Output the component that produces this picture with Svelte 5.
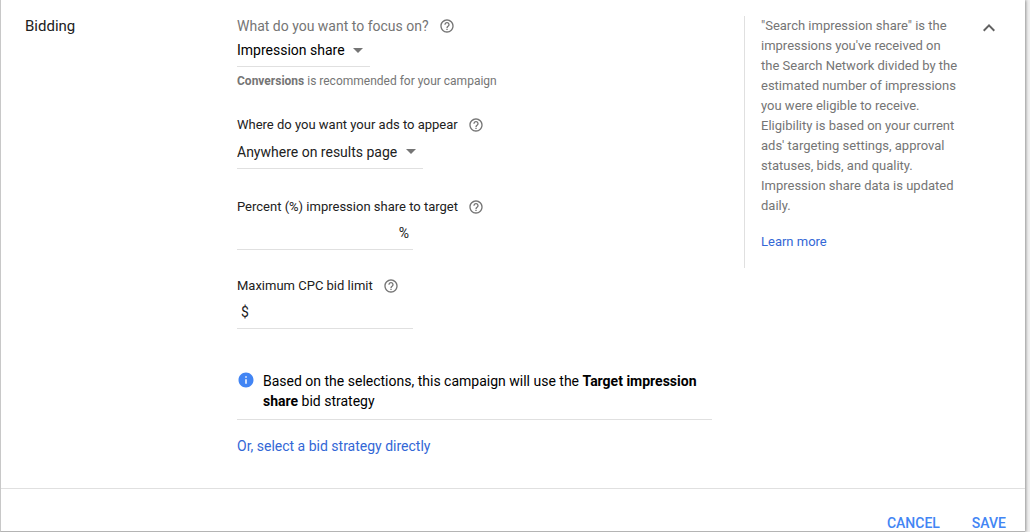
<script lang="ts">
  let focus = $state("Impression share");
  let placement = $state("Anywhere on results page");
  let percent = $state("");
  let bidLimit = $state("");
  let expanded = $state(true);

  const focusOptions = ["Conversions", "Clicks", "Impression share"];
  const placementOptions = [
    "Anywhere on results page",
    "Top of results page",
  ];
</script>

{#snippet help(topic: string)}
  <button type="button" class="help" aria-label={`Help: ${topic}`}>
    <svg viewBox="0 0 24 24" aria-hidden="true">
      <path
        d="M11 18h2v-2h-2v2zm1-16C6.48 2 2 6.48 2 12s4.48 10 10 10 10-4.48 10-10S17.52 2 12 2zm0 18c-4.41 0-8-3.59-8-8s3.59-8 8-8 8 3.59 8 8-3.59 8-8 8zm0-14c-2.21 0-4 1.79-4 4h2c0-1.1.9-2 2-2s2 .9 2 2c0 2-3 1.75-3 5h2c0-2.25 3-2.5 3-5 0-2.21-1.79-4-4-4z"
      />
    </svg>
  </button>
{/snippet}

{#snippet arrow()}
  <svg class="arrow" viewBox="0 0 10 5" aria-hidden="true">
    <path d="M0 0h10L5 5z" />
  </svg>
{/snippet}

<div class="panel">
  <section class="bidding">
    <h2>Bidding</h2>

    <div class="settings">
      <div class="field">
        <div class="question lead">
          <label for="focus">What do you want to focus on?</label>
          {@render help("focus")}
        </div>
        <div class="dropdown primary">
          <select id="focus" bind:value={focus}>
            {#each focusOptions as option}
              <option>{option}</option>
            {/each}
          </select>
          {@render arrow()}
        </div>
        <p class="hint"><b>Conversions</b> is recommended for your campaign</p>
      </div>

      <div class="field">
        <div class="question">
          <label for="placement">Where do you want your ads to appear</label>
          {@render help("ad placement")}
        </div>
        <div class="dropdown">
          <select id="placement" bind:value={placement}>
            {#each placementOptions as option}
              <option>{option}</option>
            {/each}
          </select>
          {@render arrow()}
        </div>
      </div>

      <div class="field">
        <div class="question">
          <label for="percent">Percent (%) impression share to target</label>
          {@render help("impression share target")}
        </div>
        <div class="amount">
          <input id="percent" type="text" inputmode="decimal" bind:value={percent} />
          <span>%</span>
        </div>
      </div>

      <div class="field">
        <div class="question">
          <label for="bid-limit">Maximum CPC bid limit</label>
          {@render help("bid limit")}
        </div>
        <div class="amount">
          <span>$</span>
          <input id="bid-limit" type="text" inputmode="decimal" bind:value={bidLimit} />
        </div>
      </div>

      <div class="summary">
        <svg viewBox="0 0 24 24" aria-hidden="true">
          <path
            d="M12 2C6.48 2 2 6.48 2 12s4.48 10 10 10 10-4.48 10-10S17.52 2 12 2zm1 15h-2v-6h2v6zm0-8h-2V7h2v2z"
          />
        </svg>
        <p>
          Based on the selections, this campaign will use the
          <b>Target impression share</b> bid strategy
        </p>
      </div>

      <a class="direct" href="#strategy">Or, select a bid strategy directly</a>
    </div>

    <aside>
      <p>
        "Search impression share" is the impressions you've received on the
        Search Network divided by the estimated number of impressions you were
        eligible to receive. Eligibility is based on your current ads' targeting
        settings, approval statuses, bids, and quality. Impression share data is
        updated daily.
      </p>
      <a href="#learn">Learn more</a>
    </aside>

    <button
      type="button"
      class="collapse"
      aria-label="Collapse bidding"
      aria-expanded={expanded}
      onclick={() => (expanded = !expanded)}
    >
      <svg viewBox="0 0 24 24" aria-hidden="true">
        <path d="M12 8l-6 6 1.41 1.41L12 10.83l4.59 4.58L18 14z" />
      </svg>
    </button>
  </section>

  <footer>
    <button type="button">CANCEL</button>
    <button type="button">SAVE</button>
  </footer>
</div>

<style>
  :global(body) {
    background: #f0f0f0;
    font-family: Roboto, "Liberation Sans", sans-serif;
    font-size: 14px;
    line-height: 20px;
    color: #212121;
  }

  .panel {
    margin-right: 5px;
    background: #fff;
    border-left: 1px solid #c8c8c8;
    border-bottom: 1px solid #b4b4b4;
    box-shadow: 1px 0 3px rgba(0, 0, 0, 0.4);
  }

  .bidding {
    display: grid;
    grid-template-columns: 212px minmax(0, 1fr) 233px 24px;
    align-items: start;
    padding: 16px 24px 32px;
    border-bottom: 1px solid #e0e0e0;
  }

  h2,
  p {
    margin: 0;
  }

  h2 {
    font-size: 15px;
    font-weight: 400;
    line-height: 20px;
  }

  button,
  select,
  input {
    margin: 0;
    padding: 0;
    border: none;
    background: none;
    font: inherit;
    color: inherit;
  }

  button,
  select {
    cursor: pointer;
  }

  input {
    flex: 1;
    min-width: 0;
    outline: none;
  }

  a {
    color: #3367d6;
    text-decoration: none;
  }

  b {
    font-weight: 700;
  }

  .settings {
    margin-right: 32px;
  }

  .field {
    margin-bottom: 26px;
  }

  .question {
    display: flex;
    align-items: center;
    gap: 10px;
    font-size: 13px;
  }

  .lead {
    font-size: 14px;
    color: #757575;
  }

  .help {
    width: 16px;
    height: 16px;
  }

  .help svg {
    display: block;
    fill: #757575;
  }

  .dropdown {
    display: flex;
    align-items: center;
    gap: 8px;
    width: fit-content;
    height: 33px;
    margin-bottom: 28px;
    padding-right: 7px;
    border-bottom: 1px solid #e0e0e0;
  }

  .primary {
    height: 28px;
    margin-bottom: 6px;
    padding-bottom: 2px;
    color: #000;
  }

  select {
    appearance: none;
  }

  .arrow {
    width: 10px;
    height: 5px;
    fill: #757575;
  }

  .hint {
    font-size: 12px;
    line-height: 16px;
    color: #757575;
  }

  .amount {
    display: flex;
    align-items: center;
    gap: 4px;
    width: 168px;
    height: 32px;
    padding: 0 4px;
    border-bottom: 1px solid #e0e0e0;
  }

  .summary {
    display: flex;
    gap: 8px;
    margin: 42px 0 16px;
    padding-bottom: 8px;
    border-bottom: 1px solid #e0e0e0;
    color: #000;
  }

  .summary svg {
    flex-shrink: 0;
    width: 18px;
    height: 18px;
    fill: #4285f4;
  }

  .direct {
    display: block;
  }

  aside {
    box-sizing: border-box;
    min-height: 252px;
    padding: 0 16px;
    border-left: 1px solid #e0e0e0;
    font-size: 13px;
    color: #757575;
  }

  aside p {
    margin-bottom: 16px;
  }

  .collapse {
    width: 24px;
    height: 24px;
  }

  .collapse svg {
    display: block;
    fill: #616161;
  }

  footer {
    display: flex;
    justify-content: flex-end;
    gap: 32px;
    padding: 24px 19px 0 0;
  }

  footer button {
    height: 18px;
    font-weight: 500;
    color: #4285f4;
  }
</style>
